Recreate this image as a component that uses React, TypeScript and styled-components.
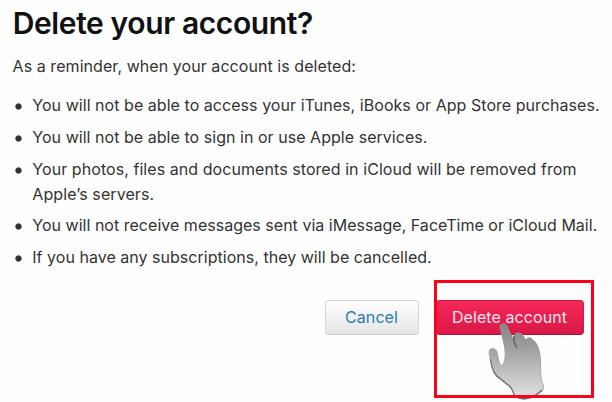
import React from 'react';
import styled, { createGlobalStyle } from 'styled-components';

const GlobalStyle = createGlobalStyle`
  * { box-sizing: border-box; }
  body {
    margin: 0;
    background: #fefefe;
    color: #333;
    font-family: Inter, sans-serif;
    overflow: hidden;
  }
`;

const Dialog = styled.main`
  position: relative;
  display: flex;
  flex-direction: column;
  width: 612px;
  height: 402px;
  padding: 4px 0 0 12px;
`;

const Title = styled.h1`
  margin: 0 0 0 0.7px;
  font-size: 30px;
  line-height: 38px;
  font-weight: 600;
  letter-spacing: -0.38px;
  color: #111;
`;

const Intro = styled.p`
  margin: 12px 0 0 0.6px;
  font-size: 16px;
  line-height: 25px;
`;

const List = styled.ul`
  display: flex;
  flex-direction: column;
  gap: 7px;
  margin: 14px 0 0;
  padding: 0;
  list-style: none;
`;

const Item = styled.li`
  display: flex;
  font-size: 16px;
  line-height: 25px;

  &:nth-child(3) {
    margin-bottom: -1px;
  }

  &::before {
    content: '';
    flex: none;
    width: 7px;
    height: 7px;
    margin: 10px 10.3px 0 3px;
    background: radial-gradient(circle, #333 2.7px, transparent 3.6px);
  }
`;

const Line = styled.span<{ $tracking?: number }>`
  display: block;
  width: max-content;
  white-space: nowrap;
  letter-spacing: ${({ $tracking = 0 }) => $tracking}px;
`;

const Actions = styled.div`
  display: flex;
  gap: 17px;
  margin: 30px 0 0 313px;
`;

const Button = styled.button<{ $danger?: boolean }>`
  width: ${({ $danger }) => ($danger ? 148 : 94)}px;
  height: 35px;
  padding: 0 1px 0 0;
  border: 1px solid ${({ $danger }) => ($danger ? '#c91c46' : '#d6d6d6')};
  border-bottom-color: ${({ $danger }) => ($danger ? '#ae1439' : '#c6c6c6')};
  border-radius: 4px;
  background: ${({ $danger }) =>
    $danger ? 'linear-gradient(#f62758, #d91848)' : 'linear-gradient(#fff, #e5e5e5)'};
  color: ${({ $danger }) => ($danger ? '#fde6ec' : '#2b7bad')};
  font: 400 16px/33px Inter, sans-serif;
  letter-spacing: 0.08px;
  white-space: nowrap;
`;

const Highlight = styled.div`
  position: absolute;
  left: 434px;
  top: 280px;
  width: 160px;
  height: 118px;
  border: 3px solid #fe0019;
  z-index: 2;
`;

const Pointer = styled.svg`
  position: absolute;
  left: 484px;
  top: 320px;
  z-index: 1;
`;

const HAND =
  'M500 328C499 325 501 323.5 503.5 323.5C506 323.5 507 325 508 328L512.5 338C514 333 518 331.5 521 333.5C523.5 335 524 337 525.5 340C528 336.5 531.5 337 533 340C538 343 540 351 540.5 360C541 369 540 378 543 384C544.5 389 542 391 538 394C531 399 522 401 514 396C513 389 511 387 506 384L496 376C493 373 492.5 370 492 365C491 360 489 357 489 353C488.5 348 493 347 496 350C498 353 497.5 357 499 361C500 366 503 367 504 361C505.5 356 505 350 504 345Z';

const HandPointer = () => (
  <Pointer width="64" height="82" viewBox="484 320 64 82" aria-hidden="true">
    <defs>
      <linearGradient id="hand-fill" x1="0" y1="0" x2="0" y2="1">
        <stop offset="0" stopColor="#858585" />
        <stop offset="0.35" stopColor="#a2a2a2" />
        <stop offset="0.7" stopColor="#c6c6c6" />
        <stop offset="1" stopColor="#e2e2e2" />
      </linearGradient>
    </defs>
    <path d={HAND} fill="#8c8c8c" transform="translate(0.3 0.6)" />
    <path d={HAND} fill="url(#hand-fill)" stroke="#9a9a9a" strokeWidth="0.4" />
    <path
      d="M514 337Q513.5 343 516.5 347"
      fill="none"
      stroke="#686868"
      strokeWidth="2"
      strokeLinecap="round"
      opacity="0.8"
    />
    <path d="M525.5 340Q525.5 343 527 346" fill="none" stroke="#868686" strokeWidth="0.8" />
    <path
      d="M490.3 359Q492 371 497 376L507 384Q512 387 514.5 396Q523 401 533 397L542 390"
      fill="none"
      stroke="#707070"
      strokeWidth="1.3"
    />
  </Pointer>
);

const CONSEQUENCES = [
  [{ text: 'You will not be able to access your iTunes, iBooks or App Store purchases.', tracking: 0.045 }],
  [{ text: 'You will not be able to sign in or use Apple services.', tracking: 0.04 }],
  [
    { text: 'Your photos, files and documents stored in iCloud will be removed from', tracking: 0.065 },
    { text: 'Apple’s servers.', tracking: 0.09 },
  ],
  [{ text: 'You will not receive messages sent via iMessage, FaceTime or iCloud Mail.', tracking: 0.02 }],
  [{ text: 'If you have any subscriptions, they will be cancelled.', tracking: 0.025 }],
];

export default function App() {
  return (
    <>
      <GlobalStyle />
      <Dialog>
        <Title>Delete your account?</Title>
        <Intro>
          <Line $tracking={0.06}>As a reminder, when your account is deleted:</Line>
        </Intro>
        <List>
          {CONSEQUENCES.map((lines) => (
            <Item key={lines[0].text}>
              <div>
                {lines.map(({ text, tracking }) => (
                  <Line key={text} $tracking={tracking}>
                    {text}
                  </Line>
                ))}
              </div>
            </Item>
          ))}
        </List>
        <Actions>
          <Button>Cancel</Button>
          <Button $danger>Delete account</Button>
        </Actions>
        <HandPointer />
        <Highlight />
      </Dialog>
    </>
  );
}
